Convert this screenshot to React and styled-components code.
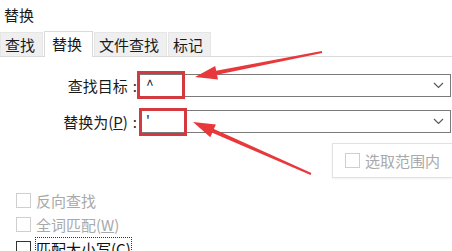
import styled, { createGlobalStyle } from "styled-components";

const GlobalStyle = createGlobalStyle`
  html, body {
    margin: 0;
    padding: 0;
    background: #ffffff;
  }
  body {
    font-family: "Noto Sans CJK SC", "Noto Sans", sans-serif;
    color: #1a1a1a;
  }
`;

const Page = styled.div`
  position: relative;
  width: 452px;
  height: 251px;
  overflow: hidden;
  background: #fff;
`;

const Title = styled.div`
  height: 32px;
  padding-left: 4px;
  font-size: 15px;
  line-height: 30px;
`;

const TabBar = styled.div`
  display: flex;
  gap: 1px;
  height: 25px;
  border-bottom: 1px solid #dadada;
  box-sizing: border-box;
`;

const Tab = styled.div`
  width: ${(p) => p.$w}px;
  box-sizing: border-box;
  font-size: 15px;
  line-height: 24px;
  background: ${(p) => (p.$active ? "#ffffff" : "#efefef")};
  border: 1px solid ${(p) => (p.$active ? "#dadada" : "#e6e6e6")};
  border-bottom: none;
  margin-top: ${(p) => (p.$active ? "-1px" : "0")};
  height: ${(p) => (p.$active ? "26px" : "24px")};
  padding-left: ${(p) => (p.$active ? "7px" : "4px")};
`;

const Form = styled.div`
  display: grid;
  grid-template-columns: 139px 1fr;
  row-gap: 13px;
  padding-top: 17px;
  padding-right: 1px;
`;

const Label = styled.div`
  font-size: 15px;
  line-height: 23px;
  text-align: right;
  padding-right: 2px;
  white-space: nowrap;
`;

const Colon = styled.span`
  margin-left: 5px;
`;

const Combo = styled.div`
  display: flex;
  align-items: center;
  justify-content: space-between;
  height: 23px;
  box-sizing: border-box;
  border: 1px solid #7a7a7a;
  padding: 0 6px 0 6px;
  font-size: 14px;
  color: #222;
`;

const ComboValue = styled.span`
  line-height: 18px;
  margin-top: -4px;
`;

const Scope = styled.div`
  display: flex;
  justify-content: flex-end;
  margin-top: 10px;
`;

const ScopeBox = styled.div`
  display: flex;
  align-items: center;
  gap: 5px;
  width: 120px;
  height: 35px;
  box-sizing: border-box;
  border: 1px solid #e2e2e2;
  border-right: none;
  padding-left: 12px;
  box-shadow: 0 1px 2px rgba(0, 0, 0, 0.06);
`;

const Box = styled.span`
  display: inline-block;
  width: 15px;
  height: 15px;
  box-sizing: border-box;
  border: 1px solid ${(p) => (p.$on ? "#333" : "#cfcfcf")};
  background: #fff;
  flex: none;
`;

const Muted = styled.span`
  font-size: 15px;
  color: ${(p) => (p.$on ? "#111" : "#a9a9a9")};
  white-space: nowrap;
`;

const Options = styled.div`
  display: flex;
  flex-direction: column;
  gap: 9px;
  margin-top: 15px;
  padding-left: 16px;
`;

const Option = styled.div`
  display: flex;
  align-items: center;
  gap: 5px;
  height: 15px;
`;

const Focus = styled.span`
  outline: 1px dotted #333;
  outline-offset: 0;
  line-height: 17px;
`;

const Highlight = styled.div`
  position: absolute;
  left: ${(p) => p.$x}px;
  top: ${(p) => p.$y}px;
  width: 48px;
  height: 28px;
  box-sizing: border-box;
  border: 3px solid #d23a40;
`;

const Overlay = styled.svg`
  position: absolute;
  left: 0;
  top: 0;
  pointer-events: none;
`;

function Chevron() {
  return (
    <svg width="11" height="7" viewBox="0 0 11 7">
      <path d="M1 1 L5.5 5.5 L10 1" fill="none" stroke="#555" strokeWidth="1.1" />
    </svg>
  );
}

export default function App() {
  return (
    <Page>
      <GlobalStyle />
      <Title>替换</Title>
      <TabBar>
        <Tab $w={43}>查找</Tab>
        <Tab $w={49} $active>替换</Tab>
        <Tab $w={73}>文件查找</Tab>
        <Tab $w={43}>标记</Tab>
      </TabBar>
      <Form>
        <Label>
          查找目标<Colon>:</Colon>
        </Label>
        <Combo>
          <ComboValue>^</ComboValue>
          <Chevron />
        </Combo>
        <Label>
          替换为(<u>P</u>)<Colon>:</Colon>
        </Label>
        <Combo>
          <ComboValue>'</ComboValue>
          <Chevron />
        </Combo>
      </Form>
      <Scope>
        <ScopeBox>
          <Box />
          <Muted>选取范围内</Muted>
        </ScopeBox>
      </Scope>
      <Options>
        <Option>
          <Box />
          <Muted>反向查找</Muted>
        </Option>
        <Option>
          <Box />
          <Muted>全词匹配(<u>W</u>)</Muted>
        </Option>
        <Option>
          <Box $on />
          <Muted $on>
            <Focus>匹配大小写(<u>C</u>)</Focus>
          </Muted>
        </Option>
      </Options>
      <Highlight $x={137} $y={71} />
      <Highlight $x={139} $y={108} />
      <Overlay width="452" height="251" viewBox="0 0 452 251">
        <polygon
          fill="#e8383b"
          points="195,77 218,79.6 217,74.7 322.2,53 321.8,51 216.2,70.8 215.2,65.9"
        />
        <polygon
          fill="#e8383b"
          points="193,122 210.3,137.3 212.3,132.7 310.6,174.9 311.4,173.1 213.9,129.1 215.9,124.5"
        />
      </Overlay>
    </Page>
  );
}
